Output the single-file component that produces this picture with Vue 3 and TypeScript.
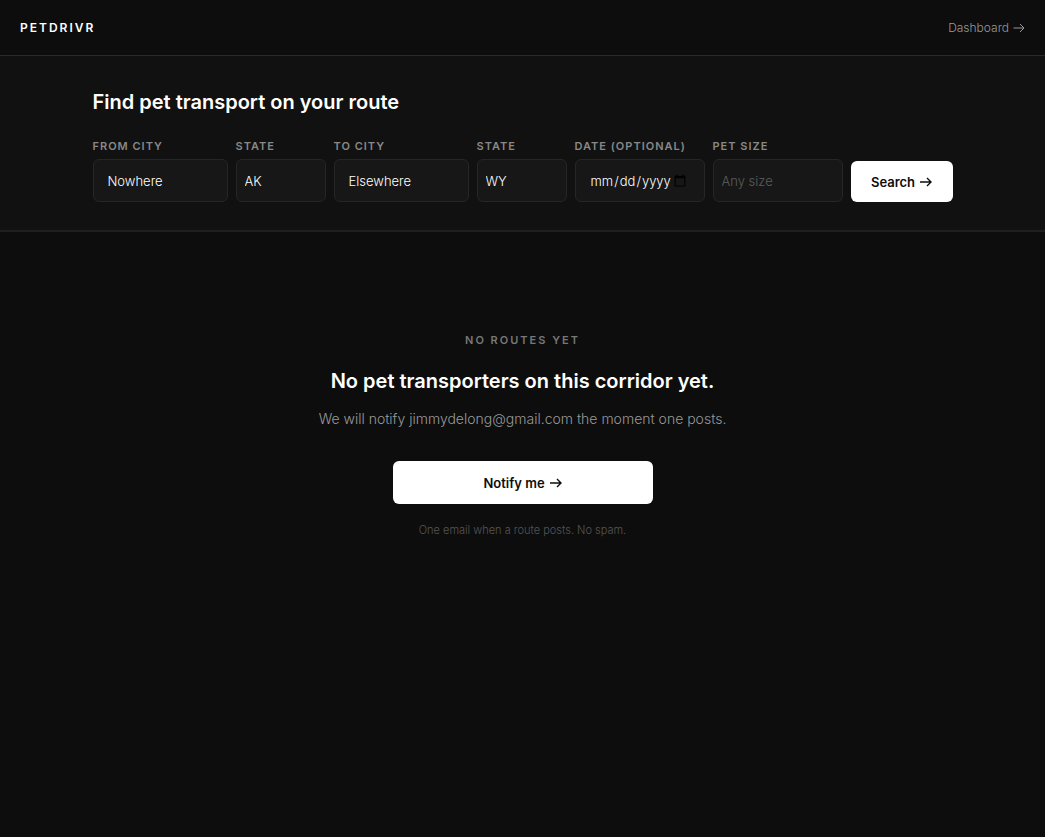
<script setup lang="ts">
import { ref } from 'vue'

const fromCity = ref('Nowhere')
const fromState = ref('AK')
const toCity = ref('Elsewhere')
const toState = ref('WY')
const date = ref('')
const petSize = ref('')
const email = 'jimmydelong@gmail.com'

const states: string[] = ['AK', 'AL', 'AZ', 'CA', 'CO', 'FL', 'GA', 'NY', 'OR', 'TX', 'UT', 'WA', 'WY']
const sizes: string[] = ['Small', 'Medium', 'Large']
</script>

<template>
  <div class="page">
    <header class="topbar">
      <a class="brand" href="#">PETDRIVR</a>
      <a class="dash" href="#">
        Dashboard
        <svg class="arrow thin" viewBox="0 0 12 10" aria-hidden="true"><path d="M0.5 5H11M7 1L11 5L7 9" /></svg>
      </a>
    </header>

    <section class="search">
      <div class="inner">
        <h1>Find pet transport on your route</h1>
        <form class="fields" @submit.prevent>
          <div class="field city">
            <label for="from-city">FROM CITY</label>
            <input id="from-city" v-model="fromCity" type="text" />
          </div>
          <div class="field state">
            <label for="from-state">STATE</label>
            <select id="from-state" v-model="fromState">
              <option v-for="s in states" :key="s" :value="s">{{ s }}</option>
            </select>
          </div>
          <div class="field city">
            <label for="to-city">TO CITY</label>
            <input id="to-city" v-model="toCity" type="text" />
          </div>
          <div class="field state">
            <label for="to-state">STATE</label>
            <select id="to-state" v-model="toState">
              <option v-for="s in states" :key="s" :value="s">{{ s }}</option>
            </select>
          </div>
          <div class="field option">
            <label for="date">DATE (OPTIONAL)</label>
            <input id="date" v-model="date" class="date" type="date" />
          </div>
          <div class="field option">
            <label for="pet-size">PET SIZE</label>
            <select id="pet-size" v-model="petSize" :class="{ empty: !petSize }">
              <option value="">Any size</option>
              <option v-for="s in sizes" :key="s" :value="s">{{ s }}</option>
            </select>
          </div>
          <button class="btn submit" type="submit">
            Search
            <svg class="arrow" viewBox="0 0 12 10" aria-hidden="true"><path d="M0 5H11M7 1L11 5L7 9" /></svg>
          </button>
        </form>
      </div>
    </section>

    <main class="empty-state">
      <p class="eyebrow">NO ROUTES YET</p>
      <h2>No pet transporters on this corridor yet.</h2>
      <p class="lead">We will notify {{ email }} the moment one posts.</p>
      <button class="btn notify" type="button">
        Notify me
        <svg class="arrow" viewBox="0 0 12 10" aria-hidden="true"><path d="M0 5H11M7 1L11 5L7 9" /></svg>
      </button>
      <p class="note">One email when a route posts. No spam.</p>
    </main>
  </div>
</template>

<style>
html,
body {
  margin: 0;
  background: #0d0d0d;
}
</style>

<style scoped>
.page {
  min-height: 100vh;
  background: #0d0d0d;
  color: #fff;
  font-family: Inter, "Liberation Sans", sans-serif;
}

.page * {
  box-sizing: border-box;
}

.topbar {
  display: flex;
  align-items: center;
  justify-content: space-between;
  height: 56px;
  padding: 0 20px;
  border-bottom: 1px solid #2a2a2a;
}

.brand {
  color: #fff;
  font-size: 12px;
  font-weight: 600;
  letter-spacing: 2px;
  text-decoration: none;
}

.dash {
  display: flex;
  align-items: center;
  gap: 4px;
  color: #999;
  font-size: 12px;
  font-weight: 300;
  line-height: 18px;
  text-decoration: none;
}

.arrow {
  width: 12px;
  height: 10px;
  fill: none;
  stroke: currentColor;
  stroke-width: 1.4;
}

.thin {
  stroke-width: 1;
}

.search {
  padding: 30px 20px 28px;
  background: #111;
  border-bottom: 2px solid #1f1f1f;
}

.inner {
  max-width: 860px;
  margin: 0 auto;
}

h1,
h2 {
  margin: 0;
  font-size: 20px;
  font-weight: 600;
  line-height: 32px;
}

.fields {
  display: flex;
  align-items: flex-end;
  gap: 8px;
  margin-top: 20px;
}

.field {
  display: flex;
  flex-direction: column;
  gap: 5px;
  min-width: 0;
}

.city {
  flex: 1;
}

.state {
  width: 90px;
}

.option {
  width: 130px;
}

label {
  color: #888;
  font-size: 11px;
  font-weight: 600;
  letter-spacing: 1px;
  line-height: 16px;
  white-space: nowrap;
}

input,
select {
  width: 100%;
  height: 43px;
  padding: 0 14px;
  border: 1px solid #262626;
  border-radius: 6px;
  background: #171717;
  color: #fff;
  font-family: inherit;
  font-size: 13px;
  font-weight: 300;
}

select {
  appearance: none;
  padding: 0 8px;
}

select.empty {
  color: #5c5c5c;
}

.date {
  padding-right: 17px;
}

.date::-webkit-calendar-picker-indicator {
  width: 14px;
  height: 14px;
  margin-left: 0;
  padding: 0;
}

.btn {
  display: flex;
  align-items: center;
  justify-content: center;
  gap: 5px;
  padding: 0 20px;
  border: 0;
  border-radius: 6px;
  background: #fff;
  color: #0d0d0d;
  font-family: inherit;
  font-size: 13px;
  font-weight: 600;
  white-space: nowrap;
}

.submit {
  width: 102px;
  height: 41px;
}

.empty-state {
  display: flex;
  flex-direction: column;
  align-items: center;
  padding: 100px 20px;
  text-align: center;
}

.empty-state p {
  margin: 0;
}

.empty-state .eyebrow {
  margin-bottom: 17px;
  color: #777;
  font-size: 11px;
  font-weight: 600;
  letter-spacing: 2px;
  line-height: 16px;
}

.empty-state .lead {
  margin-top: 6px;
  color: #999;
  font-size: 14px;
  font-weight: 300;
  line-height: 32px;
}

.notify {
  width: 260px;
  height: 43px;
  margin-top: 26px;
}

.empty-state .note {
  margin-top: 17px;
  color: #555;
  font-size: 11px;
  font-weight: 300;
  line-height: 18px;
}
</style>
